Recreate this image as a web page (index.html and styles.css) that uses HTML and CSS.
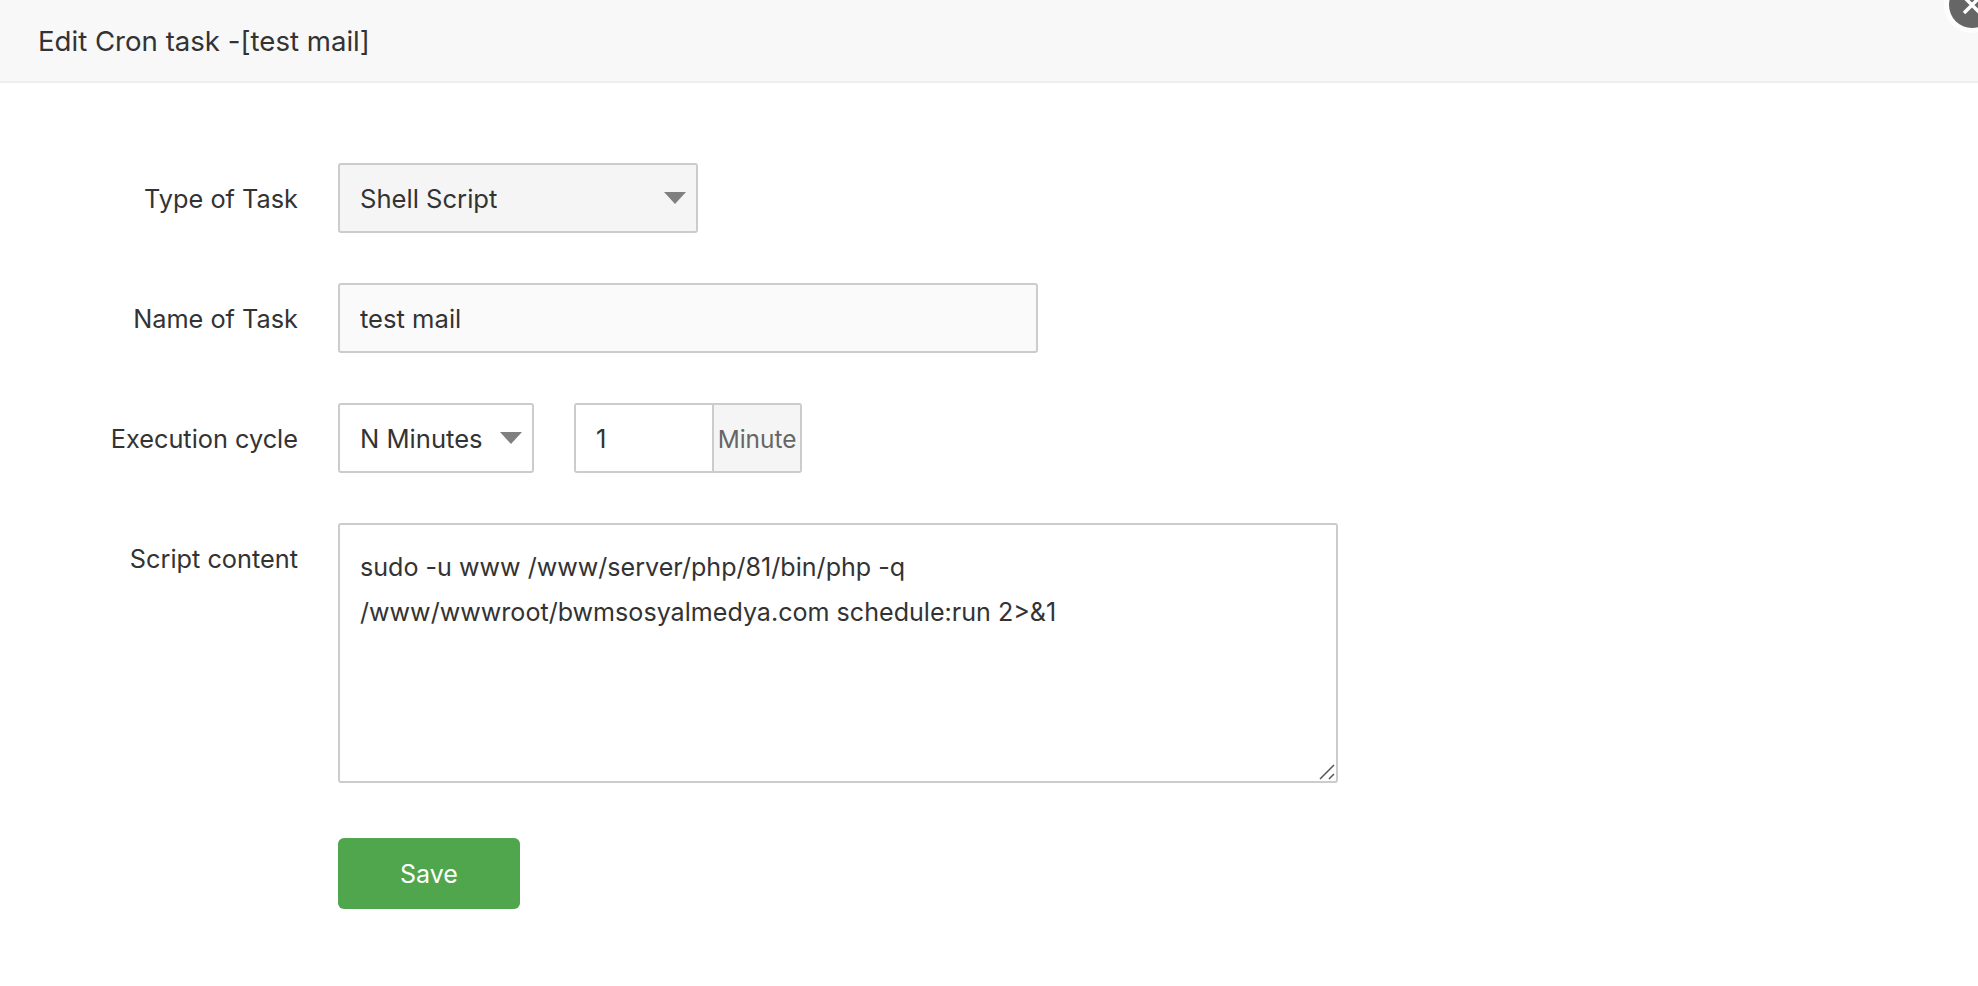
FILE: index.html
```html
<!DOCTYPE html>
<html lang="en">
<head>
<meta charset="utf-8">
<title>Edit Cron task</title>
<link rel="stylesheet" href="styles.css">
</head>
<body>
<div class="dialog">
  <header class="dialog-head">Edit Cron task -[test mail]</header>
  <a class="close" aria-label="Close">
    <svg width="22" height="22" viewBox="0 0 22 22"><path d="M3 3 19 19M19 3 3 19" stroke="#fff" stroke-width="3.5" fill="none"/></svg>
  </a>
  <form class="form">
    <div class="row">
      <label class="label">Type of Task</label>
      <div class="select-wrap type-select">
        <select class="control select tinted"><option>Shell Script</option></select>
      </div>
    </div>
    <div class="row">
      <label class="label">Name of Task</label>
      <input class="control name-input" type="text" value="test mail">
    </div>
    <div class="row">
      <label class="label">Execution cycle</label>
      <div class="select-wrap cycle-select">
        <select class="control select"><option>N Minutes</option></select>
      </div>
      <div class="group">
        <input class="group-input" type="text" value="1">
        <span class="addon">Minute</span>
      </div>
    </div>
    <div class="row row-script">
      <label class="label">Script content</label>
      <div class="script-wrap">
        <textarea class="script">sudo -u www /www/server/php/81/bin/php -q /www/wwwroot/bwmsosyalmedya.com schedule:run 2&gt;&amp;1</textarea>
        <svg class="grip" width="16" height="16" viewBox="0 0 16 16"><path d="M1 15 15 1M10 15 15 10" stroke="#555" stroke-width="1.5" fill="none"/></svg>
      </div>
    </div>
    <div class="row row-actions">
      <button class="save" type="button">Save</button>
    </div>
  </form>
</div>
</body>
</html>
```
FILE: styles.css
```css
* { box-sizing: border-box; }
html, body { margin: 0; height: 100%; background: #fff; overflow: hidden; }
body, input, select, textarea, button {
  font-family: Inter, "Noto Sans", sans-serif;
  font-size: 25.6px;
  color: #333;
}
.dialog { position: relative; height: 100%; }
.dialog-head {
  height: 83px;
  padding-left: 38px;
  line-height: 83px;
  font-size: 27.6px;
  background: #f8f8f8;
  border-bottom: 2px solid #eee;
}
.close {
  position: absolute;
  top: -18px;
  right: -17px;
  width: 46px;
  height: 46px;
  border-radius: 50%;
  background: #666;
  box-shadow: 0 0 0 5px rgba(255,255,255,.75);
  display: flex;
  align-items: center;
  justify-content: center;
}
.form { padding-top: 80px; }
.row { display: flex; align-items: flex-start; margin-bottom: 50px; }
.label {
  width: 298px;
  height: 70px;
  margin-right: 40px;
  font-size: 25.3px;
  line-height: 72px;
  text-align: right;
  flex: none;
}
.control {
  height: 70px;
  padding: 1px 20px 0;
  border: 2px solid #ccc;
  border-radius: 3px;
  background: #fff;
  outline: none;
}
.select-wrap { position: relative; }
.select-wrap::after {
  content: "";
  position: absolute;
  right: 12px;
  top: 29px;
  border-left: 11px solid transparent;
  border-right: 11px solid transparent;
  border-top: 12px solid #808080;
  pointer-events: none;
}
.select { appearance: none; width: 100%; display: block; }
.tinted { background: #f5f5f5; }
.type-select { width: 360px; }
.cycle-select { width: 196px; margin-right: 40px; }
.name-input { width: 700px; background: #fafafa; }
.group {
  display: flex;
  width: 228px;
  height: 70px;
  border: 2px solid #ccc;
  border-radius: 3px;
  overflow: hidden;
}
.group-input {
  width: 136px;
  border: 0;
  padding: 1px 20px 0;
  outline: none;
  background: #fff;
}
.addon {
  flex: 1;
  border-left: 2px solid #ccc;
  background: #f5f5f5;
  color: #666;
  font-size: 24.4px;
  text-align: center;
  line-height: 68px;
  white-space: nowrap;
}
.row-script { margin-bottom: 55px; }
.script-wrap { position: relative; }
.script {
  display: block;
  width: 1000px;
  height: 260px;
  padding: 20px;
  font-size: 25.1px;
  line-height: 45px;
  border: 2px solid #ccc;
  border-radius: 3px;
  outline: none;
  resize: none;
}
.grip { position: absolute; right: 3px; bottom: 3px; pointer-events: none; }
.row-actions { padding-left: 338px; margin-bottom: 0; }
.save {
  width: 182px;
  height: 71px;
  border: 0;
  border-radius: 6px;
  background: #50a64c;
  color: #fff;
  font-size: 25px;
}
```
